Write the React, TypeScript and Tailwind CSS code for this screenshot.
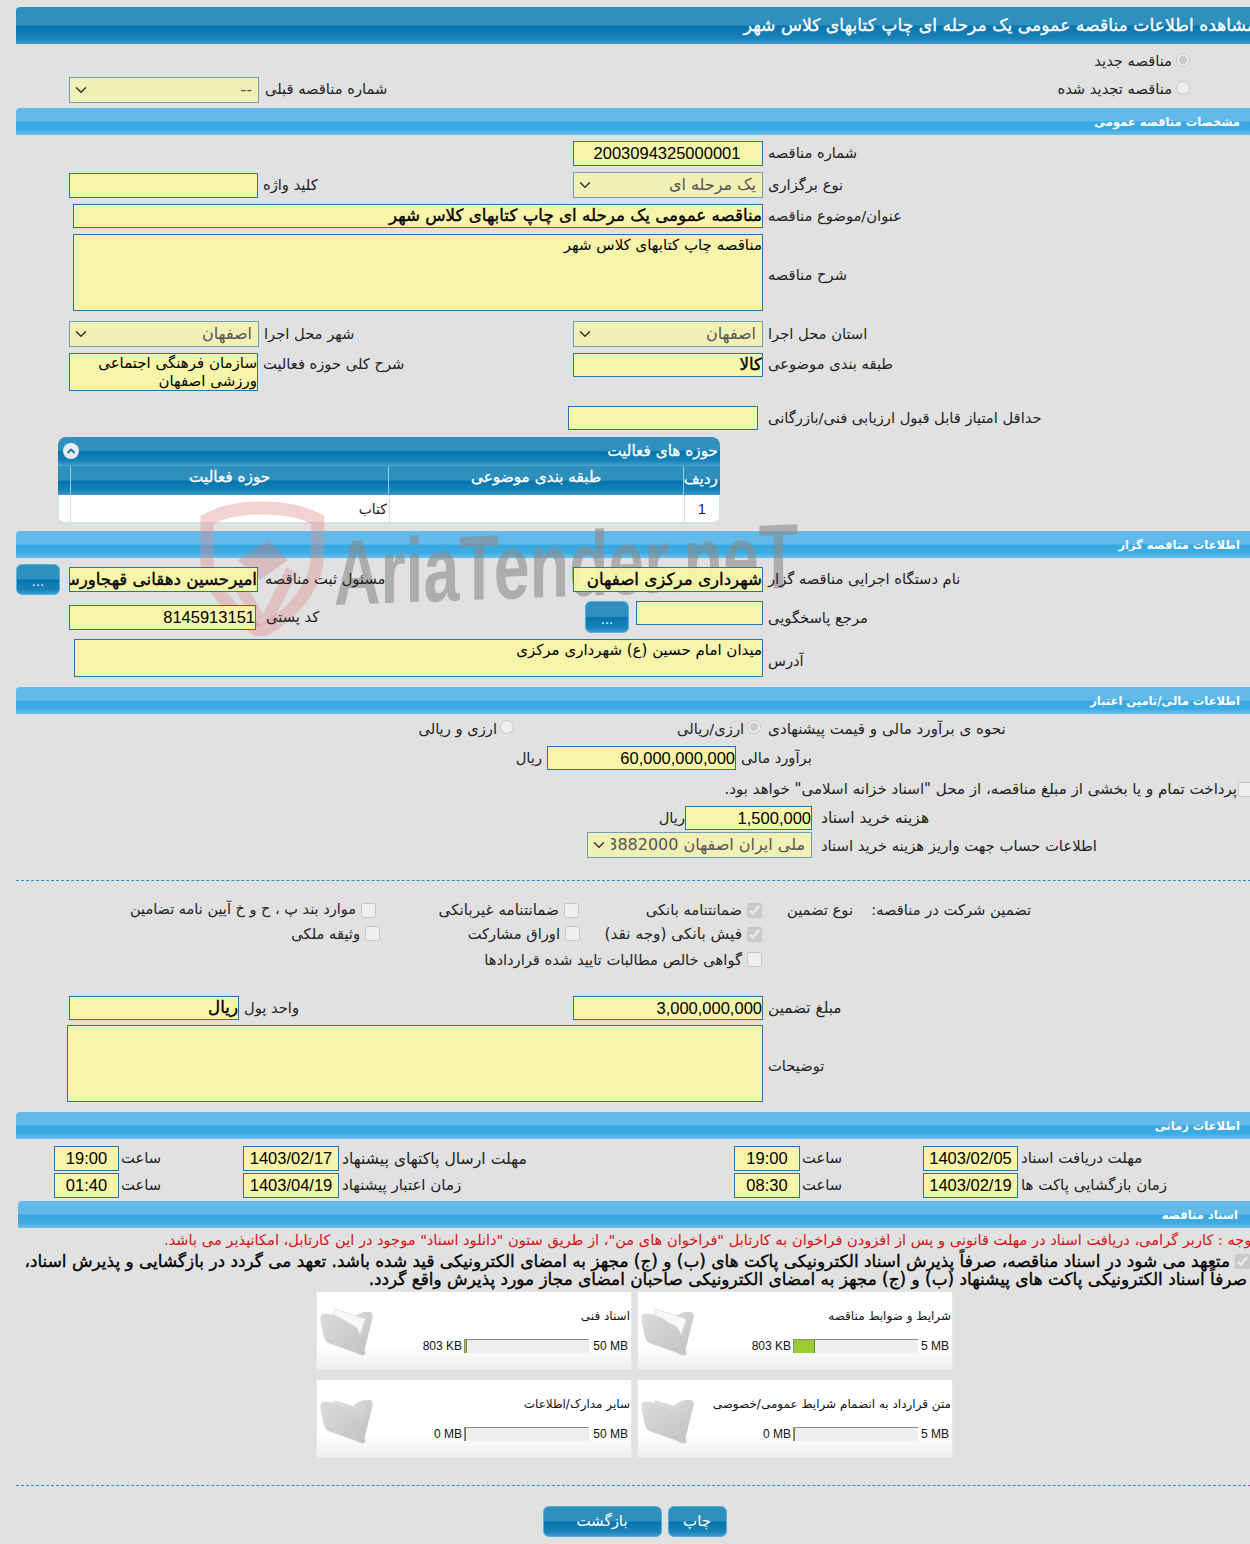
import React from "react";
import { ChevronDown, ChevronUp } from "lucide-react";

const bigBar = "bg-[linear-gradient(to_bottom,#2f90be_0%,#2f90be_48%,#0474ad_52%,#1a83b8_85%,#3a9ccd_100%)]";
const secBar = "bg-[linear-gradient(to_bottom,#62baea_0%,#62baea_48%,#37a8e1_52%,#3dabe3_80%,#6cc0ec_100%)]";
const faux = "[-webkit-text-stroke:0.35px_currentColor]";

function Section({ title, className = "", pr = "pr-[16px]" }: { title: string; className?: string; pr?: string }) {
  return (
    <div className={`h-[27px] ${secBar} rounded-t-[4px] flex items-center pt-[3px] ${pr} text-white font-bold text-[11.5px] ${className}`} dir="rtl">
      {title}
    </div>
  );
}

function T({ children, className = "", size = "text-[14.7px]" }: { children: React.ReactNode; className?: string; size?: string }) {
  return <span dir="rtl" className={`relative z-20 whitespace-nowrap text-[#222] ${size} ${className}`}>{children}</span>;
}

function Box({ w, h = 25, children, bold, ltrNum, className = "" }: { w: number; h?: number; children?: React.ReactNode; bold?: boolean; ltrNum?: boolean; className?: string }) {
  return (
    <div
      dir="rtl"
      style={{ width: w, height: h }}
      className={`relative z-20 shrink-0 overflow-hidden whitespace-nowrap border border-[#2377a6] bg-[#f8f5a6]/95 text-black flex items-center text-right ${bold ? `text-[16.7px] ${faux}` : ltrNum ? "text-[16.5px]" : "text-[15px]"} ${ltrNum ? "font-['Liberation_Sans',sans-serif]" : ""} ${className}`}
    >
      {children}
    </div>
  );
}

function Sel({ w, h = 26, value }: { w: number; h?: number; value: string }) {
  return (
    <div style={{ width: w, height: h }} className="relative z-20 shrink-0 border border-[#6f9fb8] bg-[#f3f0b6] flex items-center pl-[2px] pr-[6px] text-[#555] text-[16px] overflow-hidden whitespace-nowrap">
      <ChevronDown size={18} strokeWidth={2} className="text-[#333] shrink-0" />
      <span dir="rtl" className="flex-1 min-w-0 ml-[3px] overflow-hidden text-right">{value}</span>
    </div>
  );
}

function Btn({ className = "", children }: { className?: string; children: React.ReactNode }) {
  return (
    <div className={`relative z-20 ${bigBar} border border-[#4db2e0] rounded-[6px] text-white flex items-center justify-center ${className}`}>{children}</div>
  );
}

function Check({ checked }: { checked?: boolean }) {
  return <input type="checkbox" disabled checked={checked} readOnly className="relative z-20 w-[15px] h-[15px] shrink-0 m-0 accent-[#c8c8c8]" />;
}

function Radio({ checked, className = "" }: { checked?: boolean; className?: string }) {
  return <input type="radio" disabled checked={checked} readOnly className={`relative z-20 w-[14px] h-[14px] shrink-0 m-0 ${className}`} />;
}

function Folder({ papers }: { papers?: boolean }) {
  return (
    <svg width="56" height="50" viewBox="0 0 56 50" className="shrink-0">
      <defs>
        <linearGradient id="fb" x1="0" y1="0" x2="1" y2="1">
          <stop offset="0" stopColor="#e4e4e4" />
          <stop offset="1" stopColor="#bdbdbd" />
        </linearGradient>
        <linearGradient id="ff" x1="0" y1="0" x2="1" y2="1">
          <stop offset="0" stopColor="#dcdcdc" />
          <stop offset="1" stopColor="#c2c2c2" />
        </linearGradient>
      </defs>
      <path d="M14 6 L33 12 C37 8 44 5 50 6 C53 7 53 10 52 14 L44 46 C43 49 41 49 38 48 L8 26 Z" fill="url(#fb)" />
      {papers && <path d="M15 3 L45 13 L37 38 L10 20 Z" fill="#f8f8f8" stroke="#e6e6e6" />}
      <path d="M1 10 C2 8 4 8 6 8 C12 8 22 12 28 17 C32 19 36 20 38 24 L45 46 C46 49 43 50 40 48 L9 37 C6 36 5 33 4 30 L1 14 Z" fill="url(#ff)" stroke="#c9c9c9" strokeWidth="0.5" />
    </svg>
  );
}

function Card({ title, max, used, pct, papers, maxW }: { title: string; max: string; used: string; pct: number; papers?: boolean; maxW: number }) {
  return (
    <div className="w-[316px] h-[79px] bg-[linear-gradient(to_bottom,#ffffff_70%,#eeeeee_100%)] border border-[#e6e6e6] flex items-stretch relative">
      <div className="pt-[14px] pl-[3px]"><Folder papers={papers} /></div>
      <div className="flex-1 flex flex-col pr-[1px] pt-[16px] text-[#111]">
        <div dir="rtl" className="text-[12px] leading-[16px] whitespace-nowrap">{title}</div>
        <div className="flex items-center justify-end mt-[14px] text-[12px] font-['Liberation_Sans',sans-serif] h-[15px]">
          <span className="whitespace-nowrap">{used}</span>
          <div className="w-[125px] h-[14px] bg-[#eeeeee] border-t border-l border-[#8a8a8a] ml-[2px] shrink-0">
            <div style={{ width: `${pct}%` }} className="h-full bg-[#9acd32] border-r border-[#6b8e23]" />
          </div>
          <span style={{ width: maxW }} className="text-right pr-[2px] whitespace-nowrap">{max}</span>
        </div>
      </div>
    </div>
  );
}

export default function App() {
  return (
    <div className="relative w-[1250px] h-[1544px] overflow-hidden bg-[#e1e1e1] font-['DejaVu_Sans',sans-serif] text-[14px]">
      <div className="pl-[16px] pt-[7px] w-[1256px]">
        {/* page title */}
        <div dir="rtl" className={`h-[37px] ${bigBar} rounded-t-[4px] flex items-center text-white text-[17.2px] ${faux} whitespace-nowrap`}>
          مشاهده اطلاعات مناقصه عمومی یک مرحله ای چاپ کتابهای کلاس شهر
        </div>

        {/* radios */}
        <div className="h-[32px] flex items-center justify-end pr-[66px] gap-[4px] pt-[2px]">
          <T>مناقصه جدید</T>
          <Radio checked className="-mt-[3px]" />
        </div>
        <div className="h-[27px] flex items-center pl-[53px] pr-[66px]">
          <Sel w={190} value="--" />
          <T className="ml-[6px]">شماره مناقصه قبلی</T>
          <div className="flex-1" />
          <T>مناقصه تجدید شده</T>
          <Radio className="ml-[4px] -mt-[3px]" />
        </div>

        <Section title="مشخصات مناقصه عمومی" className="mt-[5px]" />

        <div className="h-[25px] mt-[6px] flex items-center pl-[557px]">
          <Box w={190} ltrNum className="justify-center"><span className="pr-[2px]">2003094325000001</span></Box>
          <T className="ml-[5px]">شماره مناقصه</T>
        </div>

        <div className="mt-[6px] flex items-center h-[26px]">
          <div className="w-[557px] pl-[53px] flex items-center">
            <Box w={189} />
            <T className="ml-[5px]">کلید واژه</T>
          </div>
          <Sel w={190} value="یک مرحله ای" />
          <T className="ml-[5px]">نوع برگزاری</T>
        </div>

        <div className="mt-[6px] flex items-center h-[24px] pl-[57px]">
          <Box w={690} h={24} bold>مناقصه عمومی یک مرحله ای چاپ کتابهای کلاس شهر</Box>
          <T className="ml-[5px]">عنوان/موضوع مناقصه</T>
        </div>

        <div className="mt-[6px] flex items-center h-[77px] pl-[57px]">
          <Box w={690} h={77} className="items-start"><span className="leading-[20px]">مناقصه چاپ کتابهای کلاس شهر</span></Box>
          <T className="ml-[5px] mt-[5px]">شرح مناقصه</T>
        </div>

        <div className="mt-[10px] flex items-center h-[26px]">
          <div className="w-[557px] pl-[53px] flex items-center">
            <Sel w={190} value="اصفهان" />
            <T className="ml-[5px]">شهر محل اجرا</T>
          </div>
          <Sel w={190} value="اصفهان" />
          <T className="ml-[5px]">استان محل اجرا</T>
        </div>

        <div className="mt-[6px] flex items-start h-[38px]">
          <div className="w-[557px] pl-[53px] flex items-start">
            <Box w={189} h={38} className="items-start">
              <span className="leading-[18px]">سازمان فرهنگی اجتماعی<br />ورزشی اصفهان</span>
            </Box>
            <T className="ml-[5px]">شرح کلی حوزه فعالیت</T>
          </div>
          <Box w={190} h={24} bold>کالا</Box>
          <T className="ml-[5px]">طبقه بندی موضوعی</T>
        </div>

        <div className="mt-[15px] flex items-center h-[24px] pl-[552px]">
          <Box w={190} h={24} />
          <T className="ml-[10px]">حداقل امتیاز قابل قبول ارزیابی فنی/بازرگانی</T>
        </div>

        {/* activity table */}
        <div className="mt-[7px] ml-[42px] w-[662px] h-[86px] rounded-[8px] overflow-hidden border-b border-[#cfe2ef] bg-white relative">
          <div dir="rtl" className={`h-[28px] ${bigBar} flex items-center justify-between pr-[2px] pl-[5px] text-white text-[15.3px] [-webkit-text-stroke:0.3px_currentColor]`}>
            <span>حوزه های فعالیت</span>
            <span className="w-[16px] h-[16px] rounded-full bg-[#e8eef2] flex items-center justify-center">
              <ChevronUp size={12} strokeWidth={4} className="text-[#1c7fb2]" />
            </span>
          </div>
          <div className={`h-[30px] ${bigBar} flex text-white text-[15.3px] [-webkit-text-stroke:0.3px_currentColor] border-t border-[#4aa5d2]`}>
            <div className="w-[13px] border-r border-[#8fcbe8]" />
            <div dir="rtl" className="w-[319px] border-r border-[#8fcbe8] text-center leading-[23px]">حوزه فعالیت</div>
            <div dir="rtl" className="w-[295px] border-r border-[#8fcbe8] text-center leading-[23px]">طبقه بندی موضوعی</div>
            <div dir="rtl" className="flex-1 text-right pr-[2px] leading-[27px]">ردیف</div>
          </div>
          <div className="h-[28px] flex text-[14px] text-[#222] border-x border-[#cfe2ef]">
            <div className="w-[12px] border-r border-[#dcdcdc]" />
            <div dir="rtl" className="w-[319px] border-r border-[#dcdcdc] pr-[2px] leading-[28px]">کتاب</div>
            <div className="w-[295px] border-r border-[#dcdcdc]" />
            <div className="flex-1 text-center leading-[28px] font-['Liberation_Sans',sans-serif]">1</div>
          </div>
        </div>

        <Section title="اطلاعات مناقصه گزار" className="mt-[8px]" />

        {/* tenderer */}
        <div className="mt-[6px] h-[31px] flex items-center">
          <Btn className="w-[44px] h-[31px] text-[13px] pt-[5px]">...</Btn>
          <div className="w-[513px] pl-[9px] flex items-center">
            <Box w={189} bold>امیرحسین دهقانی قهجاورستانی</Box>
            <T className="ml-[7px]">مسئول ثبت مناقصه</T>
          </div>
          <Box w={190} bold>شهرداری مرکزی اصفهان</Box>
          <T className="ml-[5px]">نام دستگاه اجرایی مناقصه گزار</T>
        </div>

        <div className="mt-[6px] h-[32px] flex items-center">
          <div className="w-[569px] pl-[53px] flex items-center">
            <Box w={187} ltrNum>8145913151</Box>
            <T className="ml-[10px]">کد پستی</T>
            <div className="flex-1" />
          </div>
          <Btn className="w-[44px] h-[32px] text-[13px] pt-[5px]">...</Btn>
          <div className="ml-[7px] -mt-[8px] flex items-center">
            <Box w={127} h={24} />
            <T className="ml-[5px] mt-[10px]">مرجع پاسخگویی</T>
          </div>
        </div>

        <div className="mt-[6px] h-[38px] flex items-center pl-[58px]">
          <Box w={689} h={38} className="items-start"><span className="leading-[20px]">میدان امام حسین (ع) شهرداری مرکزی</span></Box>
          <T className="ml-[5px] mt-[6px]">آدرس</T>
        </div>

        <Section title="اطلاعات مالی/تامین اعتبار" className="mt-[10px]" />

        {/* finance */}
        <div className="mt-[5px] h-[20px] flex items-center pl-[404px]">
          <div className="w-[77px] flex justify-end"><T>ارزی و ریالی</T></div>
          <div className="ml-[3px]"><Radio /></div>
          <div className="ml-[163px]"><T>ارزی/ریالی</T></div>
          <div className="ml-[3px]"><Radio checked /></div>
          <T className="ml-[7px]" size="text-[15.1px]">نحوه ی برآورد مالی و قیمت پیشنهادی</T>
        </div>
        <div className="mt-[7px] h-[24px] flex items-center pl-[502px]">
          <T className="w-[24px]">ریال</T>
          <Box w={189} h={24} ltrNum className="ml-[5px]">60,000,000,000</Box>
          <T className="ml-[5px]">برآورد مالی</T>
        </div>
        <div className="mt-[10px] h-[18px] flex items-center justify-end pr-[3px]">
          <T className="mr-[1px]" size="text-[15.05px]">پرداخت تمام و یا بخشی از مبلغ مناقصه، از محل "اسناد خزانه اسلامی" خواهد بود.</T>
          <Check />
        </div>
        <div className="mt-[8px] h-[24px] flex items-center pl-[646px]">
          <T className="w-[23px]">ریال</T>
          <Box w={127} h={24} ltrNum>1,500,000</Box>
          <T className="ml-[9px] mt-[2px]" size="text-[15.5px]">هزینه خرید اسناد</T>
        </div>
        <div className="mt-[2px] h-[26px] flex items-center pl-[571px]">
          <Sel w={225} value="ملی ایران اصفهان 0103883882000" />
          <T className="ml-[9px] mt-[3px]" size="text-[14.8px]">اطلاعات حساب جهت واریز هزینه خرید اسناد</T>
        </div>

        <div className="mt-[22px] border-t border-dashed border-[#2a8fc0]" />

        {/* guarantee */}
        <div dir="rtl" className="mt-[18px] h-[22px] flex items-center pr-[225px]">
          <T className="w-[178px]">تضمین شرکت در مناقصه:</T>
          <T className="w-[91px]">نوع تضمین</T>
          <div className="w-[183px] flex items-center gap-[5px]"><Check checked /><T>ضمانتنامه بانکی</T></div>
          <div className="w-[203px] flex items-center gap-[5px]"><Check /><T size="text-[15.2px]">ضمانتنامه غیربانکی</T></div>
          <div className="flex items-center gap-[5px]"><Check /><T size="text-[14.5px]">موارد بند پ ، ح و خ آیین نامه تضامین</T></div>
        </div>
        <div dir="rtl" className="mt-[1px] h-[24px] flex items-center pr-[494px]">
          <div className="w-[182px] flex items-center gap-[5px]"><Check checked /><T size="text-[15.3px]">فیش بانکی (وجه نقد)</T></div>
          <div className="w-[200px] flex items-center gap-[5px]"><Check /><T>اوراق مشارکت</T></div>
          <div className="flex items-center gap-[5px]"><Check /><T>وثیقه ملکی</T></div>
        </div>
        <div dir="rtl" className="mt-[2px] h-[24px] flex items-center pr-[494px]">
          <div className="flex items-center gap-[5px]"><Check /><T>گواهی خالص مطالبات تایید شده قراردادها</T></div>
        </div>

        <div className="mt-[24px] h-[24px] flex items-center">
          <div className="w-[557px] pl-[53px] flex items-center">
            <Box w={170} h={24} bold>ریال</Box>
            <T className="ml-[5px]">واحد پول</T>
          </div>
          <Box w={190} h={24} ltrNum>3,000,000,000</Box>
          <T className="ml-[5px]" size="text-[15.3px]">مبلغ تضمین</T>
        </div>

        <div className="mt-[5px] h-[77px] flex items-center pl-[51px]">
          <Box w={696} h={77} />
          <T className="ml-[5px] mt-[6px]">توضیحات</T>
        </div>

        <Section title="اطلاعات زمانی" className="mt-[10px]" />

        {/* time */}
        <div className="mt-[7px] h-[25px] flex items-center pl-[38px]">
          <Box w={65} ltrNum className="justify-center">19:00</Box>
          <T className="ml-[2px] w-[122px] text-left">ساعت</T>
          <Box w={96} ltrNum className="justify-center">1403/02/17</Box>
          <T className="ml-[3px] w-[392px] text-left" size="text-[15.7px]">مهلت ارسال پاکتهای پیشنهاد</T>
          <Box w={66} ltrNum className="justify-center">19:00</Box>
          <T className="ml-[2px] w-[121px] text-left">ساعت</T>
          <Box w={95} ltrNum className="justify-center">1403/02/05</Box>
          <T className="ml-[3px]" size="text-[15px]">مهلت دریافت اسناد</T>
        </div>
        <div className="mt-[2px] h-[25px] flex items-center pl-[38px]">
          <Box w={65} ltrNum className="justify-center">01:40</Box>
          <T className="ml-[2px] w-[122px] text-left">ساعت</T>
          <Box w={96} ltrNum className="justify-center">1403/04/19</Box>
          <T className="ml-[3px] w-[392px] text-left" size="text-[15px]">زمان اعتبار پیشنهاد</T>
          <Box w={66} ltrNum className="justify-center">08:30</Box>
          <T className="ml-[2px] w-[121px] text-left">ساعت</T>
          <Box w={95} ltrNum className="justify-center">1403/02/19</Box>
          <T className="ml-[3px]" size="text-[15px]">زمان بازگشایی پاکت ها</T>
        </div>

        <Section title="اسناد مناقصه" className="mt-[3px] ml-[2px]" pr="pr-[18px]" />

        {/* documents */}
        <div dir="rtl" className="mt-[2px] text-[#d81010] text-[14.6px] leading-[20px] whitespace-nowrap h-[22px]">
          توجه : کاربر گرامی، دریافت اسناد در مهلت قانونی و پس از افزودن فراخوان به کارتابل "فراخوان های من"، از طریق ستون "دانلود اسناد" موجود در این کارتابل، امکانپذیر می باشد.
        </div>
        <div dir="rtl" className={`text-black text-[16.9px] ${faux} leading-[18px] whitespace-nowrap`}>
          <div className="flex items-center gap-[5px] pr-[6px]"><Check checked /><span>متعهد می شود در اسناد مناقصه، صرفاً پذیرش اسناد الکترونیکی پاکت های (ب) و (ج) مجهز به امضای الکترونیکی قید شده باشد. تعهد می گردد در بازگشایی و پذیرش اسناد،</span></div>
          <div className="pr-[9px]">صرفاً اسناد الکترونیکی پاکت های پیشنهاد (ب) و (ج) مجهز به امضای الکترونیکی صاحبان امضای مجاز مورد پذیرش واقع گردد.</div>
        </div>

        <div className="mt-[3px] ml-[300px] w-[637px] grid grid-cols-[316px_316px] gap-x-[5px] gap-y-[9px]">
          <Card title="اسناد فنی" max="50 MB" used="803 KB" pct={2} papers maxW={41} />
          <Card title="شرایط و ضوابط مناقصه" max="5 MB" used="803 KB" pct={17} papers maxW={33} />
          <Card title="سایر مدارک/اطلاعات" max="50 MB" used="0 MB" pct={0} maxW={41} />
          <Card title="متن قرارداد به انضمام شرایط عمومی/خصوصی" max="5 MB" used="0 MB" pct={0} maxW={33} />
        </div>

        <div className="mt-[27px] border-t border-dashed border-[#2a8fc0]" />

        <div className="mt-[20px] flex items-center justify-center gap-[6px] w-[1234px] pl-[3px]">
          <Btn className="w-[119px] h-[31px] text-[15px]"><span dir="rtl">بازگشت</span></Btn>
          <Btn className="w-[59px] h-[31px] text-[15px]"><span dir="rtl">چاپ</span></Btn>
        </div>
      </div>

      {/* watermark */}
      <div className="absolute z-10 left-[200px] top-[500px] w-[610px] h-[140px] pointer-events-none flex items-start">
        <svg width="126" height="136" viewBox="0 0 126 136" className="shrink-0" fill="none">
          <path d="M7 20 C35 4 90 4 118 20 L117 62 C114 88 92 116 60 132 C34 112 8 88 7 62 Z" stroke="#d88" strokeOpacity="0.38" strokeWidth="13" />
          <path d="M38 60 L68 40 L88 60 L60 80 Z" fill="#c77" fillOpacity="0.35" />
          <path d="M40 86 L62 124 M92 70 L66 122" stroke="#d88" strokeOpacity="0.35" strokeWidth="12" />
        </svg>
        <div className="ml-[8px] mt-[27px] origin-left text-[#8a8a8a]/60 font-bold font-['Liberation_Sans',sans-serif] text-[92px] leading-[92px] whitespace-nowrap [transform:scaleX(0.70)_skewY(-1.5deg)]">
          AriaTender.neT
        </div>
      </div>
    </div>
  );
}
